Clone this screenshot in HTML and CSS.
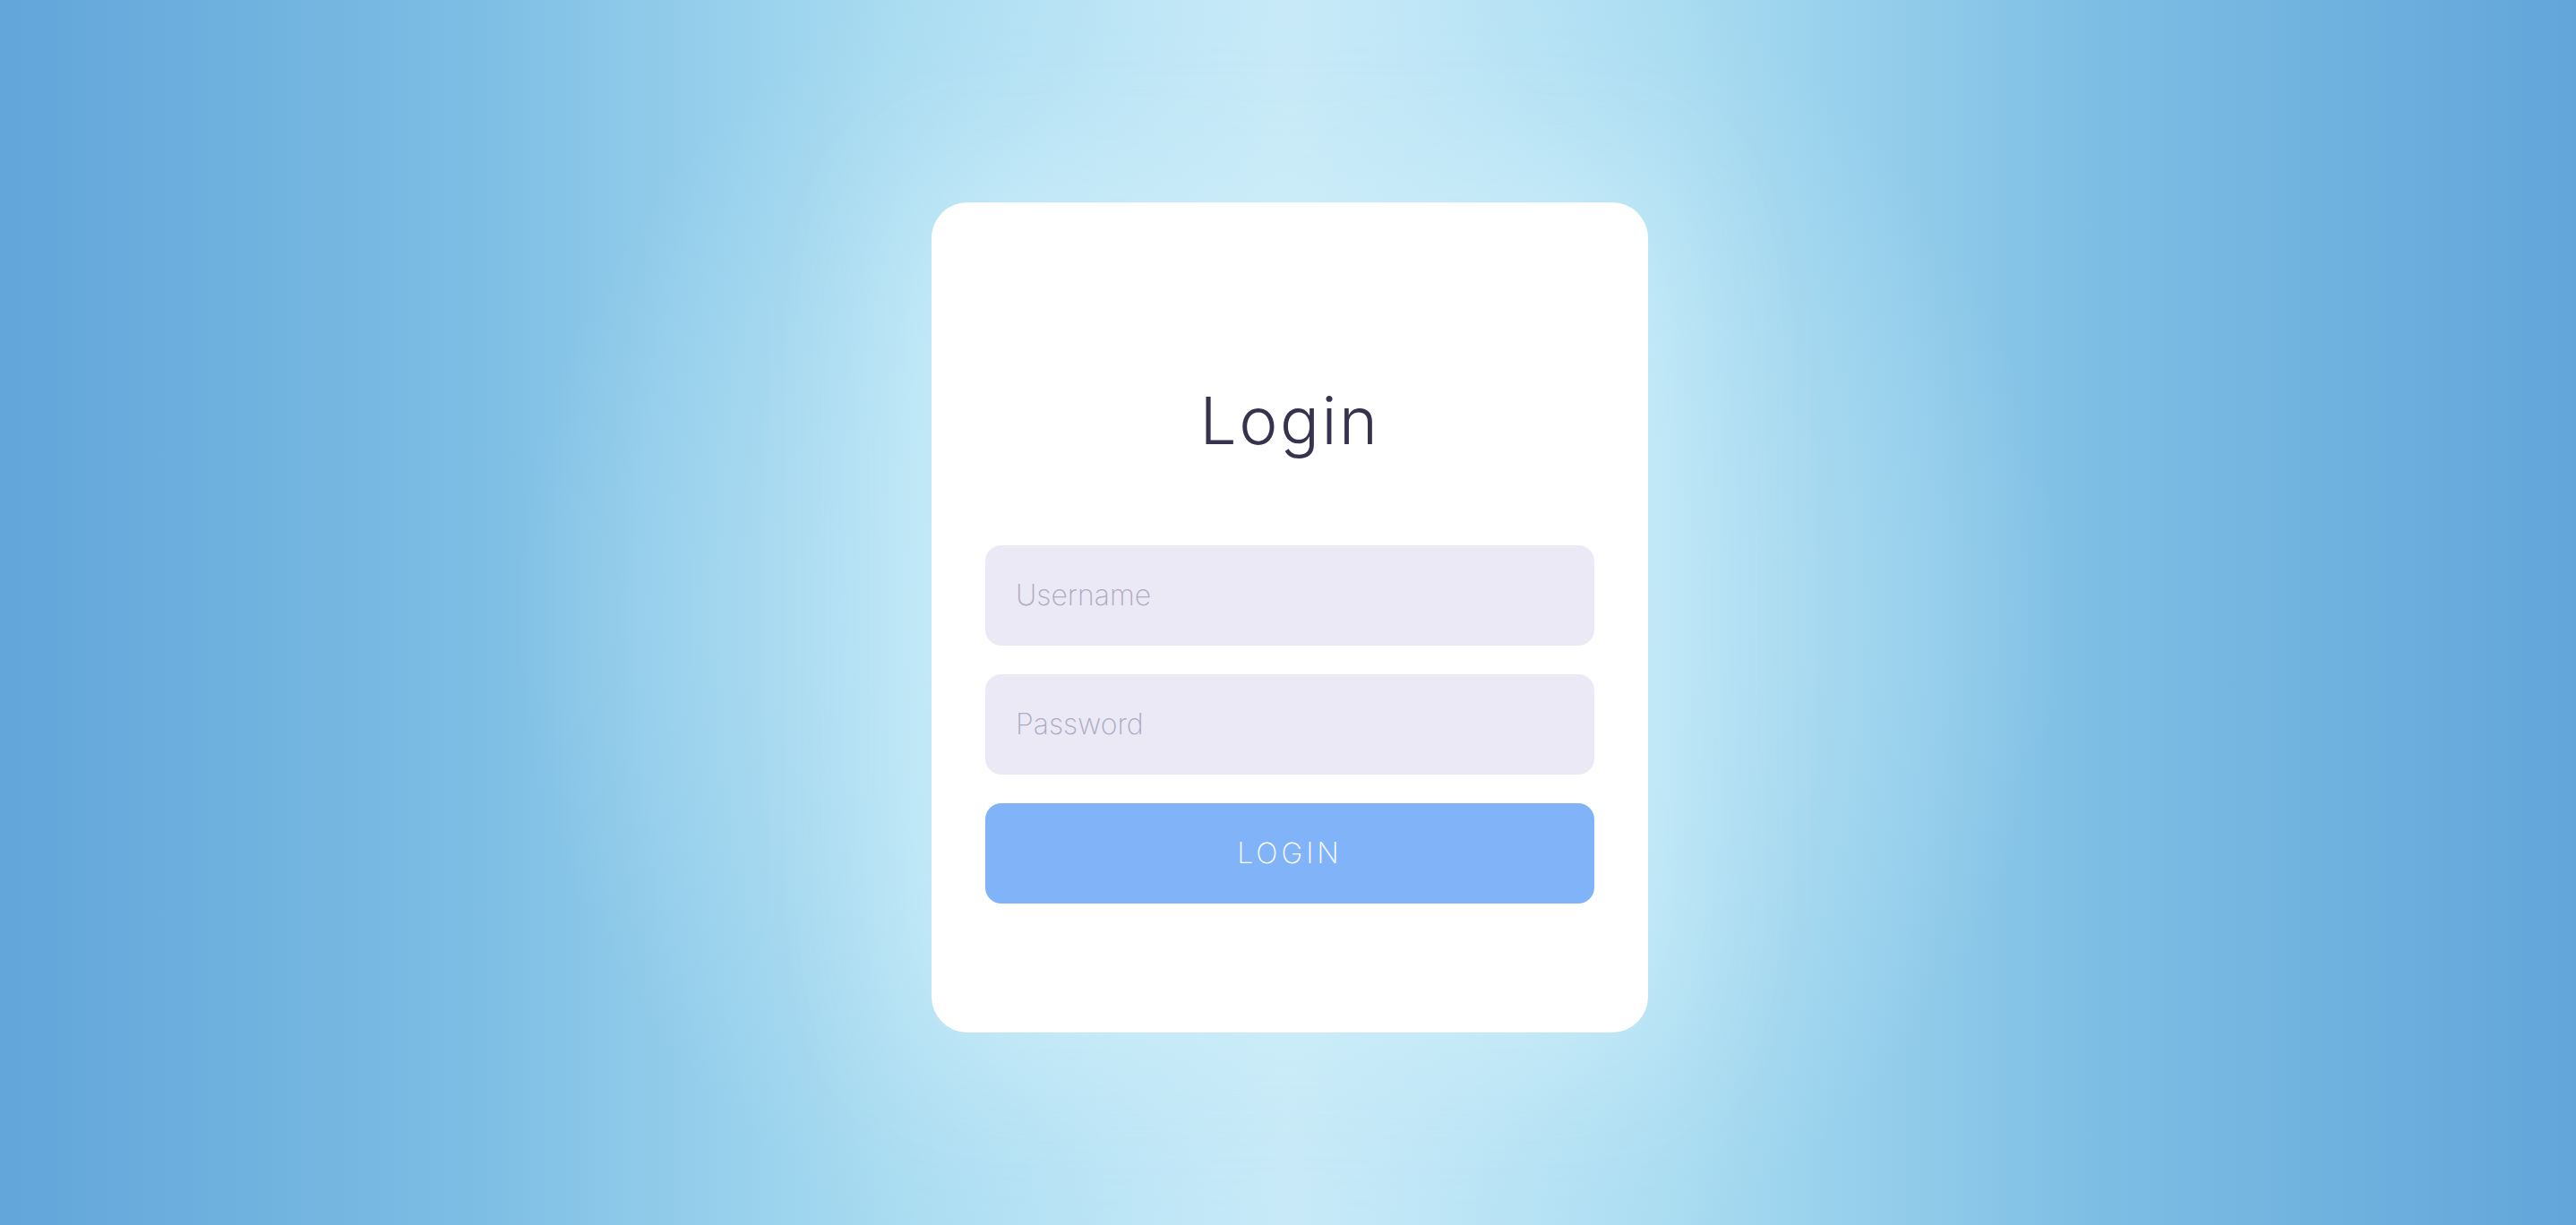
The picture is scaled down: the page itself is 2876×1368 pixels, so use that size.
FILE: index.html
```html
<!DOCTYPE html>
<html lang="en">
<head>
<meta charset="utf-8">
<title>Login</title>
<link rel="stylesheet" href="styles.css">
</head>
<body>
<main class="page">
  <form class="card" onsubmit="return false">
    <h1 class="title">Login</h1>
    <div class="fields">
      <input class="field" type="text" placeholder="Username">
      <input class="field" type="password" placeholder="Password">
      <button class="btn" type="submit">LOGIN</button>
    </div>
  </form>
</main>
</body>
</html>
```
FILE: styles.css
```css
html, body {
  margin: 0;
  padding: 0;
  height: 100%;
}
body {
  font-family: "Inter", "Lato", "Noto Sans", sans-serif;
  background-color: #62a5d9;
  background-image:
    radial-gradient(ellipse 30% 60% at 50% 50%, rgba(200, 236, 249, 0.9) 0%, rgba(200, 236, 249, 0) 100%),
    linear-gradient(to right, #62a5d9 0%, #7cbde4 18%, #a9dcf1 35%, #c8eaf8 50%, #a9dcf1 65%, #7cbde4 82%, #62a5d9 100%);
  overflow: hidden;
}
.page {
  box-sizing: border-box;
  height: 100vh;
  display: flex;
  align-items: center;
  justify-content: center;
  padding-top: 10px;
  padding-left: 4px;
}
.card {
  box-sizing: border-box;
  width: 800px;
  background: #ffffff;
  border-radius: 40px;
  padding: 199px 60px 144px;
  display: flex;
  flex-direction: column;
  box-shadow: 0 0 160px 20px rgba(205, 238, 250, 0.75);
}
.title {
  margin: 0 0 94px;
  font-size: 73px;
  line-height: 90px;
  font-weight: 280;
  letter-spacing: 2.5px;
  color: #37324d;
  text-align: center;
}
.fields {
  display: flex;
  flex-direction: column;
  gap: 32px;
}
.field {
  box-sizing: border-box;
  height: 112px;
  border: none;
  outline: none;
  border-radius: 18px;
  background: #ebe9f6;
  padding: 0 34px;
  font-family: inherit;
  font-size: 32px;
  font-weight: 200;
  color: #37324d;
}
.field::placeholder {
  color: #aeaac2;
}
.btn {
  height: 112px;
  border: none;
  border-radius: 18px;
  background: #80b3f8;
  color: #ffffff;
  font-family: inherit;
  font-size: 32px;
  font-weight: 200;
  letter-spacing: 4px;
  cursor: pointer;
}
```
